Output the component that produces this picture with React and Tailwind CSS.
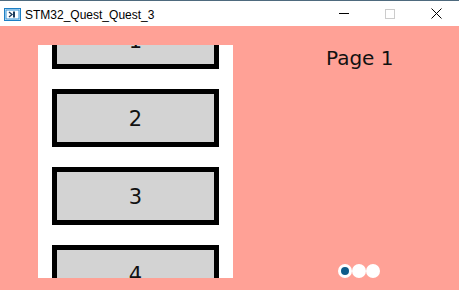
import { useState } from 'react';

const Slot = ({ n }) => (
  <div className="shrink-0 h-[58px] border-[5px] border-black bg-[#d3d3d3] flex items-center justify-center pt-[3px] text-[21px] text-[#111]">
    {n}
  </div>
);

export default function App() {
  const [page] = useState(0);

  return (
    <div className="w-[459px] h-[290px] flex flex-col bg-[#ffa196] font-['DejaVu_Sans',sans-serif] overflow-hidden">
      {/* title bar */}
      <div className="h-[26px] shrink-0 bg-white border-t border-[#4e6a7e] flex items-center">
        <svg width="17" height="13" viewBox="0 0 17 13" className="ml-[4px] mt-[1px]">
          <rect x="0.5" y="0.5" width="16" height="12" fill="#e6f2fb" stroke="#1d7fc4" />
          <rect x="2" y="2" width="13" height="9" fill="#ffffff" stroke="#2c8fd6" />
          <path d="M5 4 L8 6.5 L5 9" fill="none" stroke="#1b3a5a" strokeWidth="1.4" />
          <rect x="9" y="3.5" width="2" height="6" fill="#1b3a5a" />
        </svg>
        <span className="ml-[4px] mt-[2px] text-[12px] text-black font-['Liberation_Sans',sans-serif] leading-none">
          STM32_Quest_Quest_3
        </span>
        <div className="ml-auto flex items-center h-full">
          <div className="w-[46px] h-full flex items-center justify-center">
            <div className="w-[10px] h-px bg-black" />
          </div>
          <div className="w-[46px] h-full flex items-center justify-center">
            <div className="w-[10px] h-[10px] border border-[#cccccc]" />
          </div>
          <div className="w-[46px] h-full flex items-center justify-center">
            <svg width="11" height="11" viewBox="0 0 11 11">
              <path d="M0.5 0.5 L10.5 10.5 M10.5 0.5 L0.5 10.5" stroke="#000" strokeWidth="1" />
            </svg>
          </div>
        </div>
      </div>

      {/* content */}
      <div className="flex-1 flex">
        <div className="ml-[38px] mt-[19px] w-[195px] h-[233px] bg-white overflow-hidden">
          <div className="flex flex-col gap-[20px] px-[14px] -mt-[34px]">
            {[1, 2, 3, 4].map((n) => (
              <Slot key={n} n={n} />
            ))}
          </div>
        </div>

        <div className="flex-1 flex flex-col items-start">
          <div className="mt-[17px] ml-[93px] text-[20px] text-[#111]">Page {page + 1}</div>
          <div className="mt-auto mb-[12px] ml-[105px] flex">
            {[0, 1, 2].map((i) => (
              <div key={i} className="w-[14px] h-[14px] rounded-full bg-white flex items-center justify-center">
                {i === page && <div className="w-[8px] h-[8px] rounded-full bg-[#0f5c8a]" />}
              </div>
            ))}
          </div>
        </div>
      </div>
    </div>
  );
}
